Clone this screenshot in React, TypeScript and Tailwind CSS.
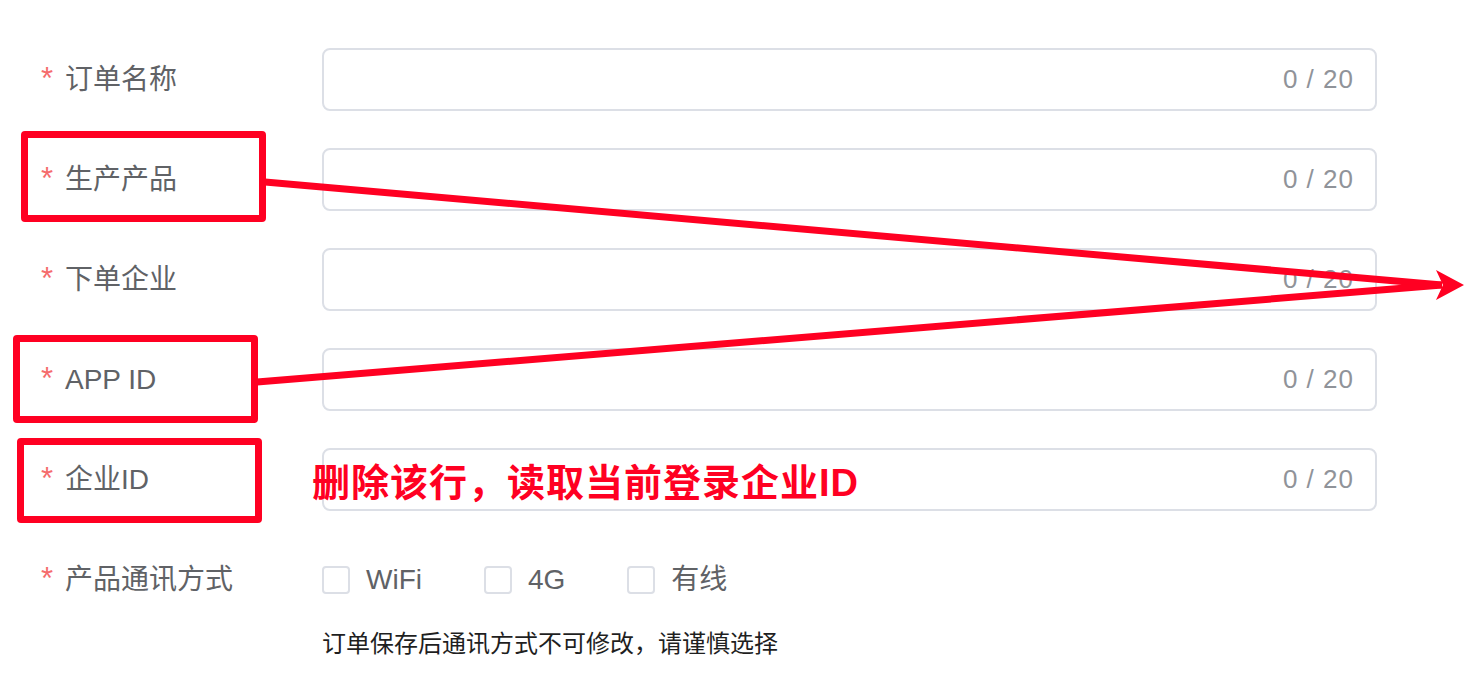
import React from "react";

const font = {
  fontFamily:
    '"Helvetica Neue", "Liberation Sans", "Noto Sans CJK SC", sans-serif',
};

const rows = ["订单名称", "生产产品", "下单企业", "APP ID", "企业ID"];

function Label({ text }: { text: string }) {
  return (
    <div className="w-[322px] shrink-0 pl-[41px] flex items-center text-[28px] text-[#606266]">
      <span className="w-[24px] text-[31px] text-[#f56c6c]">*</span>
      <span>{text}</span>
    </div>
  );
}

function Checkbox({ label }: { label: string }) {
  return (
    <div className="flex items-center gap-[16px] mr-[62px]">
      <span className="w-[28px] h-[28px] rounded-[4px] border-2 border-[#dcdfe6] bg-white" />
      <span className="text-[28px] text-[#606266]">{label}</span>
    </div>
  );
}

export default function App() {
  return (
    <div className="relative w-[1464px] h-[674px] bg-white overflow-hidden" style={font}>
      {/* form */}
      <div className="flex flex-col pt-[48px]">
        {rows.map((r) => (
          <div key={r} className="flex items-center mb-[37px]">
            <Label text={r} />
            <div className="w-[1055px] h-[63px] rounded-[8px] border-2 border-[#dcdfe6] flex items-center justify-end pr-[21px]">
              <span className="text-[26px] tracking-[1px] text-[#909399]">0 / 20</span>
            </div>
          </div>
        ))}
        <div className="flex items-center h-[63px]">
          <Label text="产品通讯方式" />
          <div className="flex items-center">
            <Checkbox label="WiFi" />
            <Checkbox label="4G" />
            <Checkbox label="有线" />
          </div>
        </div>
        <div className="pl-[322px] mt-[16px] text-[24px] leading-[34px] text-[#1f1f1f]">
          订单保存后通讯方式不可修改，请谨慎选择
        </div>
      </div>

      {/* annotations */}
      <div className="absolute left-[21px] top-[131px] w-[245px] h-[91px] border-[7px] border-[#ff0022] rounded-[4px]" />
      <div className="absolute left-[13px] top-[335px] w-[245px] h-[88px] border-[7px] border-[#ff0022] rounded-[4px]" />
      <div className="absolute left-[17px] top-[438px] w-[245px] h-[85px] border-[7px] border-[#ff0022] rounded-[4px]" />
      <svg
        className="absolute left-0 top-0 pointer-events-none"
        width="1464"
        height="674"
        viewBox="0 0 1464 674"
      >
        <line x1="265" y1="182" x2="1442" y2="285" stroke="#ff0022" strokeWidth="7" />
        <line x1="257" y1="382" x2="1442" y2="285" stroke="#ff0022" strokeWidth="7" />
        <polygon points="1464,285 1436,270 1443,285 1436,300" fill="#ff0022" />
      </svg>
      <div className="absolute left-[312px] top-[461px] text-[38px] leading-[44px] tracking-[1px] font-bold text-[#ff0022] whitespace-nowrap">
        删除该行，读取当前登录企业ID
      </div>
    </div>
  );
}
